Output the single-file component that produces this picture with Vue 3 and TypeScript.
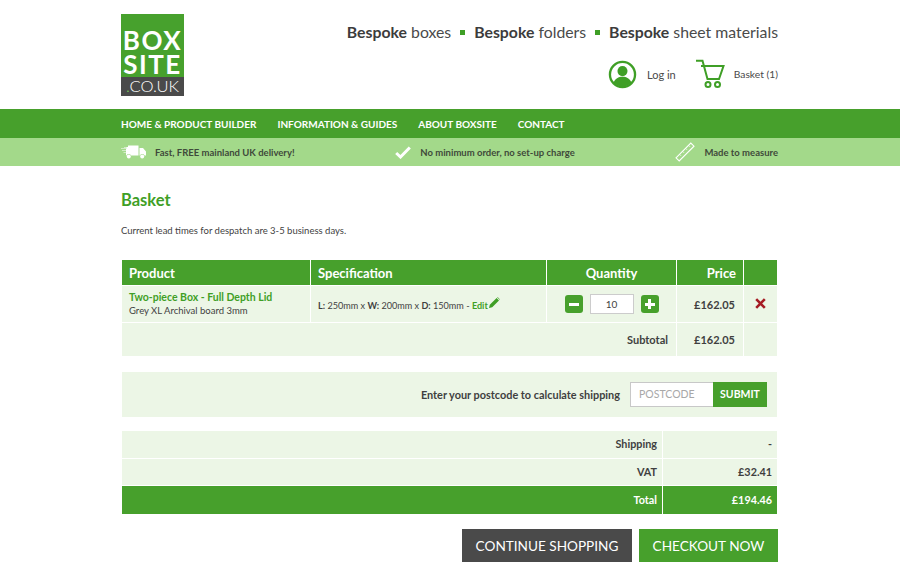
<script setup lang="ts">
const navLinks = ['HOME & PRODUCT BUILDER', 'INFORMATION & GUIDES', 'ABOUT BOXSITE', 'CONTACT']
const taglines = ['boxes', 'folders', 'sheet materials']
</script>

<template>
  <div class="page">
    <header class="wrap header">
      <div class="logo">
        <div class="logo-top">BOX<br />SITE</div>
        <div class="logo-bottom"><i>.</i>CO.UK</div>
      </div>
      <div class="header-right">
        <div class="taglines">
          <template v-for="(t, i) in taglines" :key="t">
            <span v-if="i > 0" class="sq"></span>
            <span><b>Bespoke</b> {{ t }}</span>
          </template>
        </div>
        <div class="account">
          <a class="acc-link login">
            <svg width="29" height="29" viewBox="0 0 30 30">
              <circle cx="15" cy="15" r="13" fill="none" stroke="#3f9f26" stroke-width="2.4" />
              <circle cx="15" cy="11.5" r="5.2" fill="#3f9f26" />
              <path d="M5.800 23.500c1.500-4.500 5-6.300 9.200-6.300s7.700 1.800 9.200 6.300A13 13 0 0 1 5.800 23.500z" fill="#3f9f26" />
            </svg>
            Log in
          </a>
          <a class="acc-link basket">
            <svg width="29" height="30" viewBox="0 0 29 30" fill="none" stroke="#3f9f26" stroke-width="2">
              <path d="M0 1.800h6.500L11.500 20h11.500l4.500-13H5" />
              <circle cx="12" cy="25.500" r="2.500" />
              <circle cx="21.500" cy="25.500" r="2.500" />
            </svg>
            Basket (1)
          </a>
        </div>
      </div>
    </header>

    <nav class="nav">
      <div class="wrap nav-inner">
        <a v-for="l in navLinks" :key="l">{{ l }}</a>
      </div>
    </nav>

    <div class="strip">
      <div class="wrap strip-inner">
        <div class="usp">
          <svg width="26" height="14" viewBox="0 0 26 14" fill="#fff">
            <path d="M7 0.500h10.500v10H10a2.500 2.500 0 0 0-4.500 0H5V7.500H2.500V7H5V5.500H1V5h4V4H0V3.500h5.500V2.500H3V2h4z" />
            <path d="M18.500 3h3.500l3 3.500V10.500h-1.500a2.500 2.500 0 0 0-4.500 0h-.5z" />
            <circle cx="7.800" cy="11.500" r="2" />
            <circle cx="21.200" cy="11.500" r="2" />
          </svg>
          <span class="usp-a">Fast, FREE mainland UK delivery!</span>
        </div>
        <div class="usp">
          <svg width="16" height="13" viewBox="0 0 16 13"><path d="M1.200 7l4.300 4 9.300-9.500" fill="none" stroke="#fff" stroke-width="3" /></svg>
          <span class="usp-b">No minimum order, no set-up charge</span>
        </div>
        <div class="usp">
          <svg width="20" height="20" viewBox="0 0 20 20" fill="none" stroke="#fff" stroke-width="1.100">
            <path d="M1 15.800L15.800 1 19 4.200 4.200 19z" />
            <path d="M4.500 12.300l1.500 1.500M7.500 9.300l1.500 1.500M10.500 6.300l1.500 1.500M13.500 3.300l1.500 1.500" stroke-width=".8" />
          </svg>
          <span class="usp-c">Made to measure</span>
        </div>
      </div>
    </div>

    <main class="wrap main">
      <h1>Basket</h1>
      <p class="lead">Current lead times for despatch are 3-5 business days.</p>

      <table class="basket-table">
        <colgroup>
          <col class="c1" /><col class="c2" /><col class="c3" /><col class="c4" /><col class="c5" />
        </colgroup>
        <thead>
          <tr>
            <th>Product</th>
            <th>Specification</th>
            <th class="center">Quantity</th>
            <th class="right">Price</th>
            <th></th>
          </tr>
        </thead>
        <tbody>
          <tr class="item">
            <td>
              <div class="prod-name">Two-piece Box - Full Depth Lid</div>
              <div class="prod-sub">Grey XL Archival board 3mm</div>
            </td>
            <td class="spec">
              <b>L:</b> 250mm x <b>W:</b> 200mm x <b>D:</b> 150mm -
              <a class="edit">Edit</a>
              <svg class="pencil" width="11" height="11" viewBox="0 0 11 11" fill="#3f9f26"><path d="M0 11l.8-3.200L7.600 1l2.400 2.400-6.800 6.800zM8.200.4l.4-.4 2.400 2.400-.4.400z" /></svg>
            </td>
            <td>
              <div class="qty">
                <button class="qty-btn"><span class="bar"></span></button>
                <div class="qty-input">10</div>
                <button class="qty-btn"><span class="bar"></span><span class="bar vert"></span></button>
              </div>
            </td>
            <td class="right strong">£162.05</td>
            <td class="center">
              <svg width="11" height="11" viewBox="0 0 11 11"><path d="M1.200 1.200l8.600 8.600M9.800 1.200l-8.600 8.600" stroke="#a51c24" stroke-width="2.600" /></svg>
            </td>
          </tr>
          <tr class="sub">
            <td colspan="3" class="right strong">Subtotal</td>
            <td class="right strong">£162.05</td>
            <td></td>
          </tr>
        </tbody>
      </table>

      <div class="postcode">
        <span>Enter your postcode to calculate shipping</span>
        <div class="pc-form">
          <div class="pc-input">POSTCODE</div>
          <div class="pc-submit">SUBMIT</div>
        </div>
      </div>

      <div class="totals">
        <div class="t-row"><div>Shipping</div><div>-</div></div>
        <div class="t-row"><div>VAT</div><div>£32.41</div></div>
        <div class="t-row total"><div>Total</div><div>£194.46</div></div>
      </div>

      <div class="actions">
        <a class="btn dark">CONTINUE SHOPPING</a>
        <a class="btn green">CHECKOUT NOW</a>
      </div>
    </main>
  </div>
</template>

<style>
html, body { margin: 0; overflow: hidden; background: #fff; }
</style>

<style scoped>
.page {
  height: 562px;
  overflow: hidden;
  font-family: Lato, "Open Sans", sans-serif;
  color: #3f3f3f;
}
.wrap {
  width: 657px;
  margin-left: 121px;
}

.header {
  height: 109px;
  display: flex;
  justify-content: space-between;
  padding-top: 14px;
  box-sizing: border-box;
}
.logo { width: 63px; height: 82px; }
.logo-top {
  background: #47a12d;
  height: 63px;
  box-sizing: border-box;
  padding-top: 15px;
  color: #fff;
  font-weight: 700;
  font-size: 26px;
  line-height: 23.500px;
  text-align: center;
  letter-spacing: 1.500px;
}
.logo-bottom {
  background: #4a4a4a;
  height: 19px;
  color: #fff;
  font-size: 16.500px;
  line-height: 19px;
  text-align: center;
  font-weight: 300;
}
.logo-bottom i { font-style: normal; color: #7dd05f; }

.header-right {
  display: flex;
  flex-direction: column;
  align-items: flex-end;
}
.taglines {
  display: flex;
  align-items: center;
  gap: 9px;
  font-size: 15.800px;
  line-height: 20px;
  margin-top: 8px;
  color: #4a4a4a;
}
.taglines b { font-weight: 700; color: #3c3c3c; }
.sq { width: 5px; height: 5px; background: #3f9f26; }
.account {
  display: flex;
  align-items: center;
  margin-top: 17px;
}
.acc-link {
  display: flex;
  align-items: center;
  font-size: 11px;
  color: #4a4a4a;
}
.login { gap: 10px; margin-right: 20px; }
.basket { gap: 9px; font-size: 10.300px; }

.nav {
  background: #47a02c;
  height: 29px;
}
.nav-inner {
  display: flex;
  gap: 21px;
  color: #fff;
  font-size: 10px;
  font-weight: 700;
  line-height: 30px;
}

.strip {
  height: 28px;
  background: #a3d98a;
}
.strip-inner {
  height: 28px;
  display: flex;
  align-items: center;
  justify-content: space-between;
  font-size: 9.500px;
  font-weight: 700;
  color: #3f4a3a;
}
.usp { display: flex; align-items: center; }
.usp-a { margin-left: 8px; }
.usp-b { margin-left: 9px; }
.usp-c { margin-left: 9px; }

.main { padding-top: 25px; }
h1 {
  margin: 0;
  color: #3f9f26;
  font-size: 16.500px;
  line-height: 18px;
  font-weight: 700;
}
.lead {
  margin: 15px 0 0;
  font-size: 9.500px;
  line-height: 13px;
}

.basket-table {
  width: 657px;
  margin-top: 22px;
  border-collapse: separate;
  border-spacing: 1px;
  table-layout: fixed;
  font-size: 9.500px;
}
.c1 { width: 188px; }
.c2 { width: 235px; }
.c3 { width: 129px; }
.c4 { width: 66px; }
.c5 { width: 33px; }
th {
  background: #47a02c;
  color: #fff;
  height: 25px;
  padding: 0 7px;
  text-align: left;
  font-size: 13px;
  font-weight: 700;
}
td {
  background: #ecf6e6;
  padding: 0 7px;
}
.center { text-align: center; }
.right { text-align: right; }
.item td { height: 36px; }
.sub td { height: 33px; }
.strong { font-weight: 700; font-size: 11px; padding-right: 8px; }
.prod-name {
  color: #3f9f26;
  font-weight: 700;
  font-size: 10.500px;
  line-height: 13px;
}
.prod-sub { font-size: 9.500px; line-height: 13px; }
.spec { white-space: nowrap; font-size: 9.100px; }
.spec b { font-weight: 700; }
.edit { color: #3f9f26; font-weight: 700; }
.pencil { vertical-align: 1px; margin-left: 1px; }
.qty {
  display: flex;
  justify-content: center;
  align-items: center;
  gap: 7px;
}
.qty-btn {
  position: relative;
  width: 18px;
  height: 18px;
  padding: 0;
  border: 0;
  border-radius: 3px;
  background: #47a02c;
}
.bar {
  position: absolute;
  left: 4px;
  top: 7.500px;
  width: 10px;
  height: 3px;
  background: #fff;
}
.bar.vert { left: 7.500px; top: 4px; width: 3px; height: 10px; }
.qty-input {
  box-sizing: border-box;
  width: 44px;
  height: 20px;
  border: 1px solid #ccc;
  background: #fff;
  font-size: 10px;
  line-height: 18px;
  text-align: center;
}

.postcode {
  height: 45px;
  margin: 15px 1px 0;
  padding-right: 10px;
  background: #ecf6e6;
  display: flex;
  justify-content: flex-end;
  align-items: center;
  gap: 10px;
  font-size: 10.900px;
  font-weight: 700;
}
.pc-form { display: flex; }
.pc-input {
  box-sizing: border-box;
  width: 83px;
  height: 25px;
  border: 1px solid #c8c8c8;
  border-right: 0;
  background: #fff;
  padding-left: 8px;
  color: #a8a8a8;
  font-size: 10.500px;
  font-weight: 400;
  line-height: 23px;
}
.pc-submit {
  width: 54px;
  height: 25px;
  background: #47a02c;
  color: #fff;
  font-size: 10.500px;
  line-height: 25px;
  text-align: center;
}

.totals {
  margin: 14px 1px 0;
  display: flex;
  flex-direction: column;
  gap: 1px;
  font-size: 10.800px;
  font-weight: 700;
}
.t-row {
  display: grid;
  grid-template-columns: 540px 114px;
  gap: 1px;
}
.t-row > div {
  height: 26.500px;
  line-height: 26px;
  background: #ecf6e6;
  text-align: right;
  padding-right: 5px;
  box-sizing: border-box;
}
.t-row.total > div {
  height: 28px;
  line-height: 28px;
  background: #47a02c;
  color: #fff;
}

.actions {
  display: flex;
  justify-content: flex-end;
  gap: 7px;
  margin-top: 15px;
}
.btn {
  height: 34px;
  line-height: 35px;
  text-align: center;
  color: #fff;
  font-size: 13.600px;
  font-weight: 400;
}
.dark { width: 170px; background: #4a4a4a; }
.green { width: 139px; background: #47a02c; }
</style>
